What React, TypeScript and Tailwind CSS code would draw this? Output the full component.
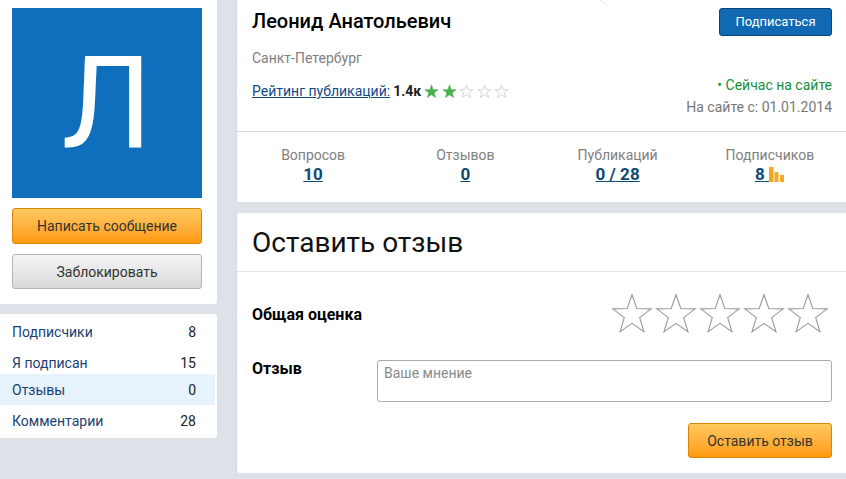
const sideLinks = [
  { label: 'Подписчики', count: 8, className: '' },
  { label: 'Я подписан', count: 15, className: '' },
  { label: 'Отзывы', count: 0, className: '-mt-1 bg-[#e6f3fc]' },
  { label: 'Комментарии', count: 28, className: '' },
];

const stats = [
  { label: 'Вопросов', value: '10' },
  { label: 'Отзывов', value: '0' },
  { label: 'Публикаций', value: '0 / 28' },
  { label: 'Подписчиков', value: '8', bars: true },
];

const STAR = 'M12 1.5 L14.6 9 L22.5 9.2 L16.2 14 L18.5 21.6 L12 17.1 L5.5 21.6 L7.8 14 L1.5 9.2 L9.4 9 Z';

function SmallStar({ filled }: { filled: boolean }) {
  return (
    <svg viewBox="0 0 24 24" className="h-[15px] w-[15px] shrink-0">
      <path d={STAR} fill={filled ? '#4cb050' : '#fff'} stroke={filled ? '#4cb050' : '#cfcfcf'} strokeWidth={filled ? 1 : 1.4} />
    </svg>
  );
}

function BigStar() {
  return (
    <svg viewBox="0 0 24 24" className="h-[44px] w-[44px] shrink-0">
      <path d={STAR} fill="#fff" stroke="#999" strokeWidth={0.6} />
    </svg>
  );
}

function Bars() {
  return (
    <svg viewBox="0 0 16 16" className="h-[16px] w-[16px]">
      <rect x="0" y="0" width="4.5" height="15" fill="#f5a623" />
      <rect x="5.5" y="5" width="4" height="10" fill="#f5a623" />
      <rect x="11" y="8" width="4" height="7" fill="#f5a623" />
    </svg>
  );
}

export default function App() {
  return (
    <div className="flex h-[479px] w-[846px] overflow-hidden bg-[#dde2e8] font-['Roboto',sans-serif]">
      <aside className="flex w-[217px] shrink-0 flex-col">
        <div className="flex h-[304px] flex-col rounded-br-[3px] bg-white pl-3 pr-[15px] pt-2">
          <div className="flex h-[190px] items-center justify-center bg-[#0f6fbc] text-[128px] font-normal leading-none text-white">
            Л
          </div>
          <button className="mt-2.5 h-9 rounded-[3px] border border-[#d9860b] bg-gradient-to-b from-[#ffc95e] to-[#ff9a05] text-sm text-[#333]">
            Написать сообщение
          </button>
          <button className="mt-2.5 h-[35px] rounded-[3px] border border-[#b5b5b5] bg-gradient-to-b from-[#f5f5f5] to-[#d9d9d9] text-sm text-[#333]">
            Заблокировать
          </button>
        </div>
        <ul className="mt-2.5 rounded-br-[3px] rounded-tr-[3px] bg-white py-0.5 text-sm">
          {sideLinks.map((item) => (
            <li key={item.label} className={`mr-0.5 flex h-[31px] items-center justify-between pl-3 pr-[19px] ${item.className}`}>
              <span className="text-[#1a3f73]">{item.label}</span>
              <span className="text-[#222]">{item.count}</span>
            </li>
          ))}
        </ul>
      </aside>

      <main className="ml-[19px] flex min-w-0 flex-1 flex-col">
        <section className="relative h-[202px] border-l border-[#d5d9de] bg-white">
          {/* faint corner of something cropped off above the card */}
          <svg viewBox="0 0 10 6" className="absolute left-[362px] top-0 h-[6px] w-[10px]">
            <path d="M1 0 L8 5" stroke="#e4e4e4" fill="none" />
          </svg>
          <div className="flex h-[132px] justify-between border-b border-[#d8d8d8] pl-[15px] pr-3.5 pt-2">
            <div>
              <h1 className="text-xl font-medium leading-[26px] text-black">Леонид Анатольевич</h1>
              <p className="mt-[14px] text-sm leading-5 text-[#808080]">Санкт-Петербург</p>
              <div className="mt-[13px] flex h-5 items-center">
                <a className="text-sm text-[#124a86] underline">Рейтинг публикаций:</a>
                <b className="ml-[3px] text-sm font-bold text-[#222]">1.4к</b>
                <span className="ml-[3px] flex gap-[2.5px]">
                  <SmallStar filled />
                  <SmallStar filled />
                  <SmallStar filled={false} />
                  <SmallStar filled={false} />
                  <SmallStar filled={false} />
                </span>
              </div>
            </div>
            <div className="flex flex-col items-end">
              <button className="h-7 w-[113px] rounded-[3px] border border-[#0d4478] bg-[#1069b2] text-[13px] text-white">
                Подписаться
              </button>
              <p className="mt-[39px] text-sm leading-[21px] text-[#15903a]">• Сейчас на сайте</p>
              <p className="text-sm leading-[22px] text-[#777]">На сайте с: 01.01.2014</p>
            </div>
          </div>
          <div className="grid grid-cols-4 pt-3.5 text-center">
            {stats.map((stat) => (
              <div key={stat.label}>
                <div className="text-sm leading-[19px] text-[#808080]">{stat.label}</div>
                <div className="flex items-center justify-center text-[17px] font-bold leading-[19px] text-[#0e4a74]">
                  <span className="underline">
                    {stat.value}
                    {stat.bars && '\u00a0'}
                  </span>
                  {stat.bars && <Bars />}
                </div>
              </div>
            ))}
          </div>
        </section>

        <section className="mt-[11px] h-[260px] rounded-tl-[3px] rounded-bl-[3px] border-l border-[#d5d9de] bg-white">
          <h2 className="flex h-[59px] items-center border-b border-[#e3e3e3] pl-[15px] pt-0.5 text-[28px] font-normal text-[#111]">
            Оставить отзыв
          </h2>
          <div className="mt-5 flex h-11 items-center justify-between pl-[15px] pr-4">
            <span className="pt-0.5 text-base font-bold text-black">Общая оценка</span>
            <span className="flex">
              <BigStar />
              <BigStar />
              <BigStar />
              <BigStar />
              <BigStar />
            </span>
          </div>
          <div className="mt-6 flex pl-[15px] pr-3.5">
            <span className="w-[125px] shrink-0 text-base font-bold leading-[17px] text-black">Отзыв</span>
            <div className="h-[42px] flex-1 rounded-[3px] border border-[#aaa] px-1.5 text-sm leading-[24px] text-[#8a8a8a]">
              Ваше мнение
            </div>
          </div>
          <div className="mt-[21px] flex justify-end pr-3.5">
            <button className="h-[35px] w-[144px] rounded-[3px] border border-[#d9860b] bg-gradient-to-b from-[#ffc95e] to-[#ff9a05] text-sm text-[#333]">
              Оставить отзыв
            </button>
          </div>
        </section>
      </main>
    </div>
  );
}
